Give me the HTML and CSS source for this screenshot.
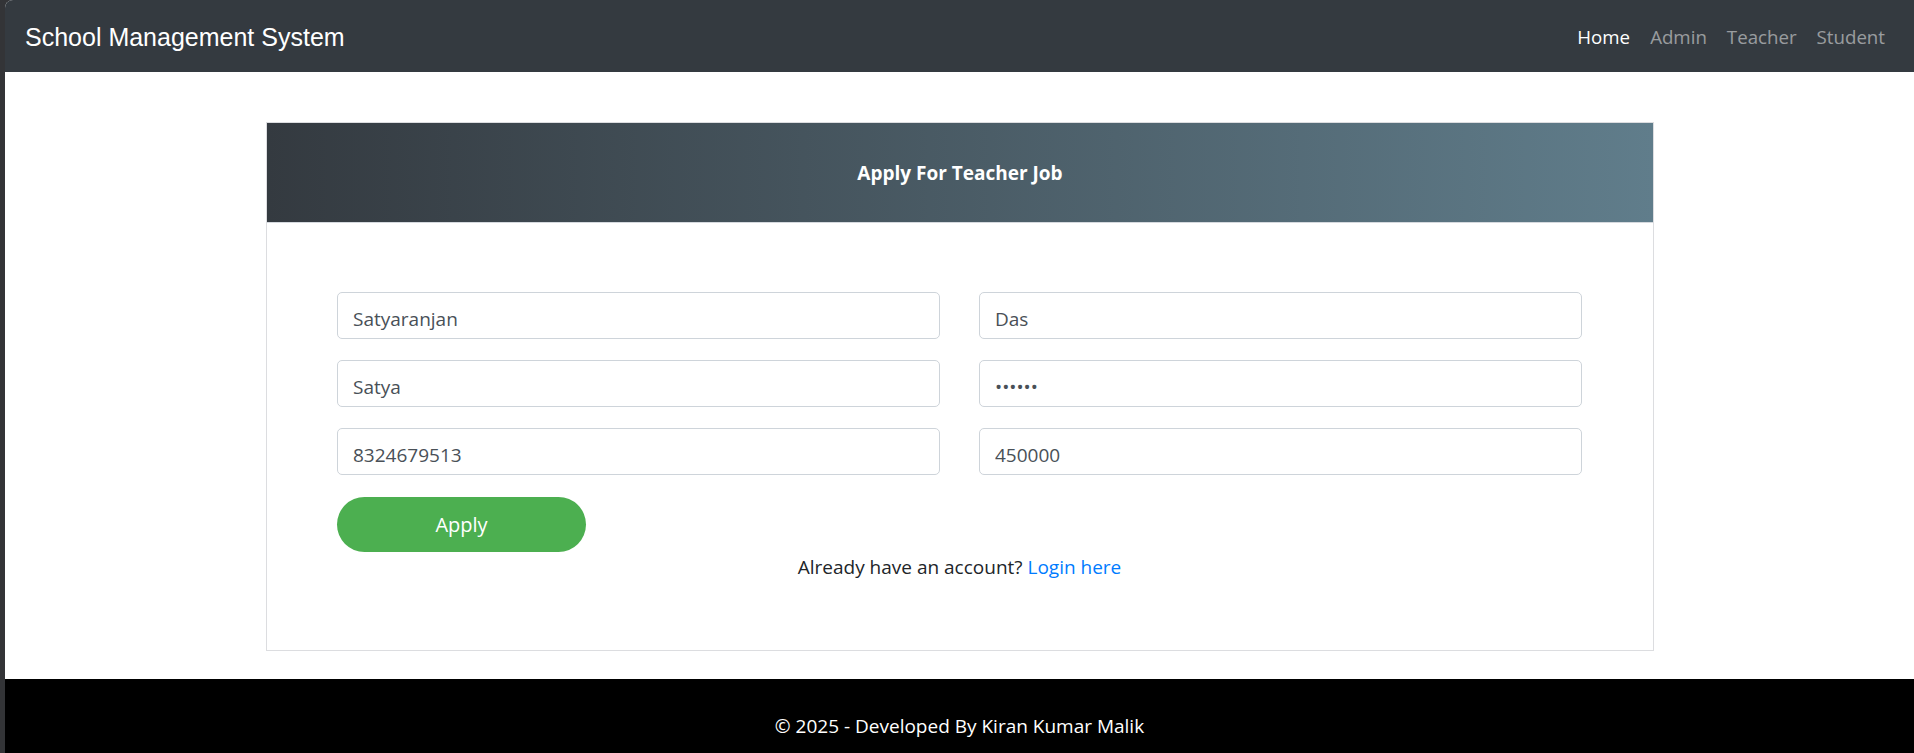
FILE: index.html
```html
<!DOCTYPE html>
<html lang="en">
<head>
<meta charset="utf-8">
<title>School Management System</title>
<link rel="stylesheet" href="styles.css">
</head>
<body>
<div class="frame">
  <nav class="navbar">
    <a class="brand" href="#">School Management System</a>
    <ul class="nav-links">
      <li><a class="nav-link active" href="#">Home</a></li>
      <li><a class="nav-link" href="#">Admin</a></li>
      <li><a class="nav-link" href="#">Teacher</a></li>
      <li><a class="nav-link" href="#">Student</a></li>
    </ul>
  </nav>
  <main class="main">
    <div class="card">
      <div class="card-header">Apply For Teacher Job</div>
      <div class="card-body">
        <form class="form">
          <div class="grid">
            <input class="field" type="text" value="Satyaranjan">
            <input class="field" type="text" value="Das">
            <input class="field" type="text" value="Satya">
            <input class="field" type="password" value="satya1">
            <input class="field" type="text" value="8324679513">
            <input class="field" type="text" value="450000">
          </div>
          <button class="btn-apply" type="button">Apply</button>
          <p class="login-line">Already have an account? <a class="login-link" href="#">Login here</a></p>
        </form>
      </div>
    </div>
  </main>
  <footer class="footer">© 2025 - Developed By Kiran Kumar Malik</footer>
</div>
</body>
</html>
```
FILE: styles.css
```css
html, body {
  margin: 0;
  padding: 0;
  height: 100%;
  overflow: hidden;
}
body {
  background: #333437;
  font-family: "Open Sans", "Noto Sans", sans-serif;
  color: #212529;
}
.frame {
  margin-left: 5px;
  min-height: 100%;
  background: #fff;
  border-top-left-radius: 8px;
  overflow: hidden;
}
.navbar {
  height: 72px;
  background: #343a40;
  display: flex;
  align-items: center;
  justify-content: space-between;
  padding: 0 19px 0 20px;
  box-sizing: border-box;
}
.brand {
  font-family: "Liberation Sans", Arial, sans-serif;
  font-size: 25px;
  color: #fff;
  text-decoration: none;
  line-height: 30px;
  margin-top: 2px;
}
.nav-links {
  list-style: none;
  margin: 0;
  padding: 0;
  display: flex;
}
.nav-link {
  display: block;
  padding: 0 10px;
  font-size: 18.7px;
  line-height: 28px;
  color: rgba(255, 255, 255, 0.5);
  text-decoration: none;
  margin-top: 2px;
}
.nav-link.active {
  color: #fff;
}
.main {
  padding: 50px 0 28px;
}
.card {
  width: 1388px;
  margin-left: 261px;
  border: 1px solid #dcdde0;
  box-sizing: border-box;
}
.card-header {
  height: 99px;
  background: linear-gradient(to right, #343a40, #607d8b);
  border-bottom: 1px solid #d5d9de;
  color: #fff;
  font-weight: 700;
  font-size: 19px;
  display: flex;
  align-items: center;
  justify-content: center;
}
.card-body {
  padding: 69px 71px 68px 70px;
}
.grid {
  display: grid;
  grid-template-columns: 1fr 1fr;
  column-gap: 39px;
  row-gap: 21px;
}
.field {
  height: 47px;
  box-sizing: border-box;
  border: 1px solid #ced4da;
  border-radius: 5px;
  padding: 7px 15px 0;
  font-family: "Open Sans", "Noto Sans", sans-serif;
  font-size: 19px;
  color: #495057;
  background: #fff;
  outline: none;
}
.btn-apply {
  display: block;
  margin-top: 22px;
  width: 249px;
  height: 55px;
  border: none;
  border-radius: 28px;
  background: #4caf50;
  color: #fff;
  font-family: "Open Sans", "Noto Sans", sans-serif;
  font-size: 20px;
}
.login-line {
  margin: 0;
  text-align: center;
  font-size: 19px;
  line-height: 30px;
}
.login-link {
  color: #007bff;
  text-decoration: none;
}
.footer {
  background: #000;
  color: #fff;
  text-align: center;
  font-size: 19px;
  line-height: 24px;
  padding: 35px 0 40px;
}
```
